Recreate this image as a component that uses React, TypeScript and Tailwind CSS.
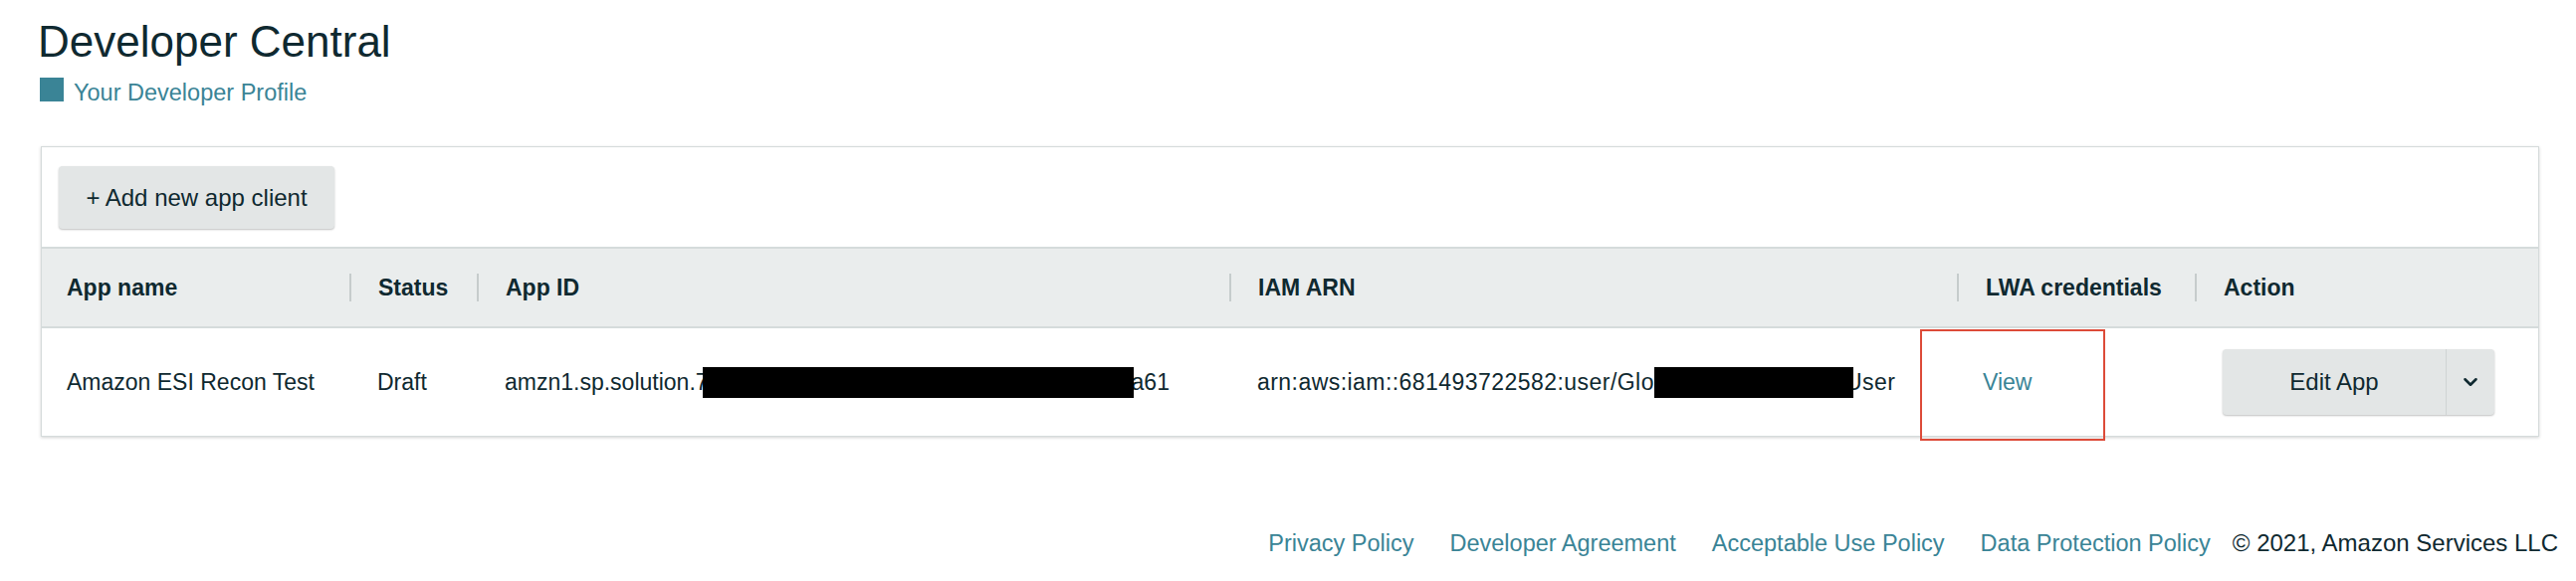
import { ChevronDown } from "lucide-react";

const headers = ["App name", "Status", "App ID", "IAM ARN", "LWA credentials", "Action"];

function Redacted({ width }: { width: number }) {
  return (
    <span
      className="relative z-10 inline-block h-[31px] bg-black align-middle"
      style={{ width }}
    />
  );
}

export default function App() {
  const footerLinks = [
    "Privacy Policy",
    "Developer Agreement",
    "Acceptable Use Policy",
    "Data Protection Policy",
  ];

  return (
    <div className="min-h-[584px] bg-white font-['Liberation_Sans',Arial,sans-serif] text-[#0f2930]">
      <div className="pl-[40px] pr-[37px] pt-[18px]">
        <h1 className="-ml-[2px] text-[44px] leading-[48px]">Developer Central</h1>
        <div className="mt-[12px] flex items-start gap-[10px]">
          <span className="h-6 w-6 bg-[#3a8496]" />
          <a className="mt-[3px] text-[23.5px] leading-[24px] text-[#3a8496]">
            Your Developer Profile
          </a>
        </div>

        <div className="relative ml-px mt-[42px] border border-[#d5dbdb] bg-white shadow-[0_1px_3px_rgba(0,0,0,0.18)]">
          <div className="px-[17px] pb-[18px] pt-[19px]">
            <button className="h-[63px] w-[277px] rounded-[4px] bg-[#e3e6e6] text-[24px] text-[#0f2930] shadow-[0_1px_2px_rgba(0,0,0,0.25)]">
              + Add new app client
            </button>
          </div>

          <div className="grid grid-cols-[310px_128px_756px_731px_239px_1fr]">
            {headers.map((h, i) => (
              <div
                key={h}
                className="flex h-[82px] items-center border-y-2 border-[#d5dbdb] bg-[#eaeded] text-[23px] font-bold"
              >
                {i > 0 && <span className="-ml-px h-[28px] w-[2px] bg-[#c6cccc]" />}
                <span className={i > 0 ? "ml-[27px]" : "ml-[25px]"}>{h}</span>
              </div>
            ))}

            <div className="flex h-[108px] items-center pl-[25px] text-[23px]">
              Amazon ESI Recon Test
            </div>
            <div className="flex items-center pl-[27px] text-[23px]">Draft</div>
            <div className="flex items-center whitespace-nowrap pl-[27px] text-[23px]">
              <span>amzn1.sp.solution.7</span>
              <span className="-ml-[6px] flex">
                <Redacted width={433} />
              </span>
              <span className="-ml-[2px]">a61</span>
            </div>
            <div className="flex items-center whitespace-nowrap pl-[27px] text-[23px]">
              <span className="tracking-[0.45px]">arn:aws:iam::681493722582:user/Glo</span>
              <span className="flex">
                <Redacted width={200} />
              </span>
              <span className="-ml-[8px] tracking-[0.45px]">User</span>
            </div>
            <div className="flex items-center pl-[25px] text-[23px] text-[#3a8496]">View</div>
            <div className="flex items-center pl-[27px]">
              <div className="flex h-[66px] w-[273px] rounded-[4px] bg-[#e3e6e6] shadow-[0_1px_2px_rgba(0,0,0,0.25)]">
                <span className="flex w-[224px] items-center justify-center text-[24px]">
                  Edit App
                </span>
                <span className="w-px bg-[#cfd4d4]" />
                <span className="flex flex-1 items-center justify-center">
                  <ChevronDown size={22} strokeWidth={2.8} />
                </span>
              </div>
            </div>
          </div>

          <div className="pointer-events-none absolute left-[1887px] top-[183px] h-[112px] w-[186px] border-2 border-[#dd4b39]" />
        </div>
      </div>

      <footer className="mt-[93px] flex justify-end pr-[18px] leading-[28px]">
        <div className="flex gap-[36px]">
          {footerLinks.map((l) => (
            <a key={l} className="text-[23.5px] text-[#3a8496]">
              {l}
            </a>
          ))}
        </div>
        <span className="ml-[22px] text-[24px]">© 2021, Amazon Services LLC</span>
      </footer>
    </div>
  );
}
